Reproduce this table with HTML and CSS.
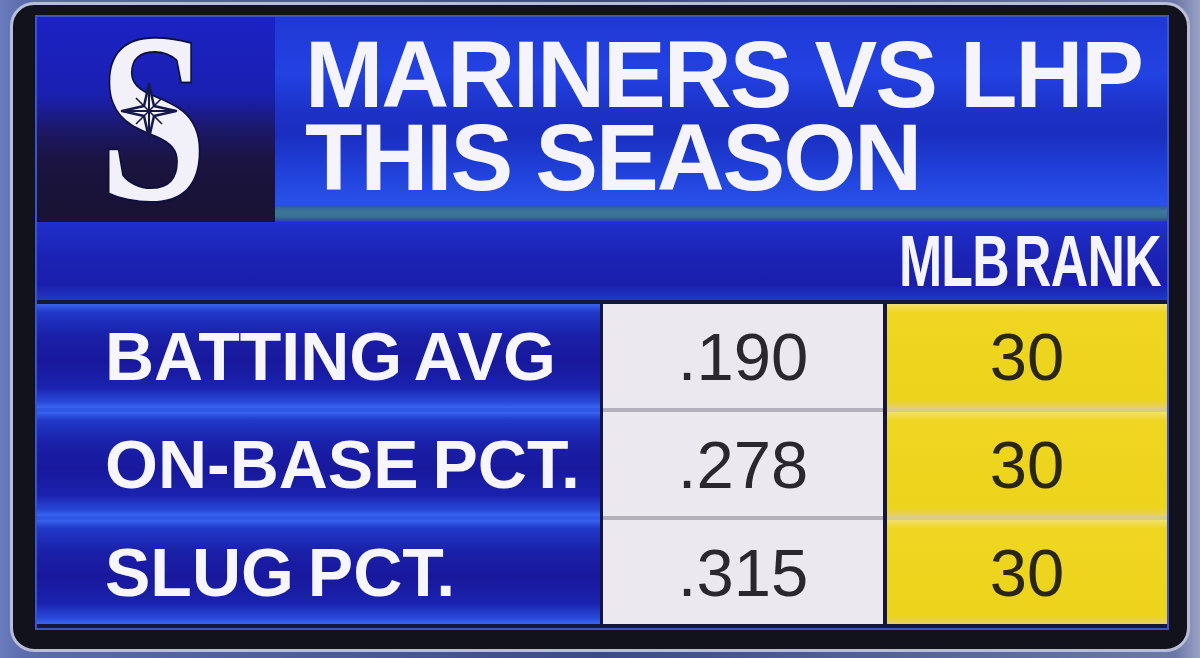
FILE: index.html
```html
<!DOCTYPE html>
<html lang="en">
<head>
<meta charset="utf-8">
<title>Mariners vs LHP This Season</title>
<link rel="stylesheet" href="styles.css">
</head>
<body>
<div class="screen">
  <div class="frame">
    <div class="board">
      <div class="header">
        <div class="logo-box">
          <svg class="logo" viewBox="0 0 238 205" aria-label="Mariners logo">
            <text class="logo-s" x="145" y="182" transform="scale(0.8 1)" text-anchor="middle">S</text>
            <g transform="translate(112 94)">
              <path d="M0 -27 L5 -5 L27 0 L5 5 L0 27 L-5 5 L-27 0 L-5 -5 Z" fill="#f4f2fa" stroke="#14184a" stroke-width="2.5" stroke-linejoin="round"/>
              <path d="M0 -27 L0 27 M-27 0 L27 0" stroke="#14184a" stroke-width="2"/>
              <path d="M-13 -13 L13 13 M13 -13 L-13 13" stroke="#14184a" stroke-width="1.6"/>
            </g>
          </svg>
        </div>
        <div class="title-col">
          <div class="title-box">
            <h1 class="title"><span class="title-line">MARINERS VS LHP</span><span class="title-line">THIS SEASON</span></h1>
          </div>
          <div class="title-strip"></div>
        </div>
      </div>
      <div class="sub-band">
        <span class="col-head">MLB RANK</span>
      </div>
      <div class="rows">
        <div class="row">
          <div class="label">BATTING AVG</div>
          <div class="value">.190</div>
          <div class="rank">30</div>
        </div>
        <div class="row">
          <div class="label">ON-BASE PCT.</div>
          <div class="value">.278</div>
          <div class="rank">30</div>
        </div>
        <div class="row last">
          <div class="label">SLUG PCT.</div>
          <div class="value">.315</div>
          <div class="rank">30</div>
        </div>
      </div>
    </div>
  </div>
</div>
</body>
</html>
```
FILE: styles.css
```css
html, body {
  margin: 0;
  padding: 0;
}
body {
  width: 1200px;
  height: 658px;
  overflow: hidden;
  background: linear-gradient(90deg, #6a7cbc 0%, #5a6cae 2%, #3c4a8a 50%, #6c78a8 98%, #9aa2c4 100%);
}
.screen {
  width: 1200px;
  height: 658px;
  padding: 2px 10px 6px 10px;
  box-sizing: border-box;
}
.frame {
  width: 1180px;
  height: 650px;
  box-sizing: border-box;
  border: 3px solid #b9bed8;
  border-radius: 24px;
  background: #12121c;
  padding: 12px 20px 21px 24px;
}
.board {
  width: 1130px;
  height: 611px;
  display: flex;
  flex-direction: column;
  background: #15163a;
  box-shadow: 0 0 0 2px #3b55c8;
}
.header {
  display: flex;
  height: 205px;
}
.logo-box {
  width: 238px;
  height: 205px;
  background: linear-gradient(180deg, #1c22c4 0%, #1a20b0 38%, #1c1868 55%, #1a1440 70%, #181232 100%);
}
.logo {
  display: block;
  width: 238px;
  height: 205px;
  overflow: visible;
}
.logo-s {
  font-family: "Liberation Serif", "DejaVu Serif", serif;
  font-weight: 700;
  font-size: 242px;
  fill: #f2f0f8;
  stroke: #0c1040;
  stroke-width: 4px;
  paint-order: stroke fill;
}
.title-col {
  flex: 1;
  display: flex;
  flex-direction: column;
}
.title-box {
  height: 188px;
  box-sizing: border-box;
  padding: 16px 0 0 30px;
  background: linear-gradient(180deg, #1f38d4 0%, #2242e2 30%, #1c30c4 52%, #1a2ec0 62%, #2144dc 85%, #2a52ea 100%);
}
.title {
  margin: 0;
  font-family: "Liberation Sans", Arial, sans-serif;
  font-weight: 700;
  font-size: 94px;
  line-height: 83px;
  letter-spacing: -2px;
  color: #f4f4fa;
  white-space: nowrap;
}
.title-line {
  display: block;
  height: 83px;
}
.title-strip {
  height: 17px;
  background: linear-gradient(180deg, #2a5a9c 0%, #3c7898 40%, #3a7090 70%, #27409e 100%);
}
.sub-band {
  height: 78px;
  display: flex;
  align-items: center;
  justify-content: flex-end;
  padding-right: 6px;
  background: linear-gradient(180deg, #1f30cc 0%, #1c24b6 40%, #1a1eaa 80%, #2238c8 100%);
}
.col-head {
  display: inline-block;
  font-family: "Liberation Sans", Arial, sans-serif;
  font-weight: 700;
  font-size: 72px;
  line-height: 1;
  color: #f4f4fa;
  letter-spacing: -1px;
  word-spacing: -12px;
  transform: scaleX(0.72);
  transform-origin: right center;
  white-space: nowrap;
}
.rows {
  display: flex;
  flex-direction: column;
  padding-top: 4px;
}
.row {
  display: flex;
  height: 104px;
  box-sizing: border-box;
}
.row + .row {
  margin-top: 4px;
}
.label {
  width: 563px;
  display: flex;
  align-items: center;
  padding-left: 68px;
  box-sizing: border-box;
  font-family: "Liberation Sans", Arial, sans-serif;
  font-weight: 700;
  font-size: 68px;
  letter-spacing: 0;
  word-spacing: -5px;
  color: #f6f6fc;
  white-space: nowrap;
  background: linear-gradient(180deg, #3a64f0 0%, #2038c8 8%, #1a20a8 30%, #18189c 55%, #1a22ae 80%, #2848d8 94%, #3a66f0 100%);
  box-shadow: 0 -4px 0 #2f58e6;
}
.value {
  width: 280px;
  margin-left: 3px;
  display: flex;
  align-items: center;
  justify-content: center;
  font-family: "Liberation Sans", Arial, sans-serif;
  font-size: 67px;
  color: #2a282e;
  background: #ece8f0;
  box-shadow: 0 -4px 0 #b4b0bc;
}
.rank {
  width: 280px;
  margin-left: 4px;
  display: flex;
  align-items: center;
  justify-content: center;
  font-family: "Liberation Sans", Arial, sans-serif;
  font-size: 67px;
  color: #2a2614;
  background: linear-gradient(180deg, #f2e070 0%, #eed622 8%, #ecd41c 92%, #e6d06a 100%);
  box-shadow: 0 -4px 0 #d8cc88;
}
.row:first-child .label,
.row:first-child .value,
.row:first-child .rank {
  box-shadow: none;
}
```
